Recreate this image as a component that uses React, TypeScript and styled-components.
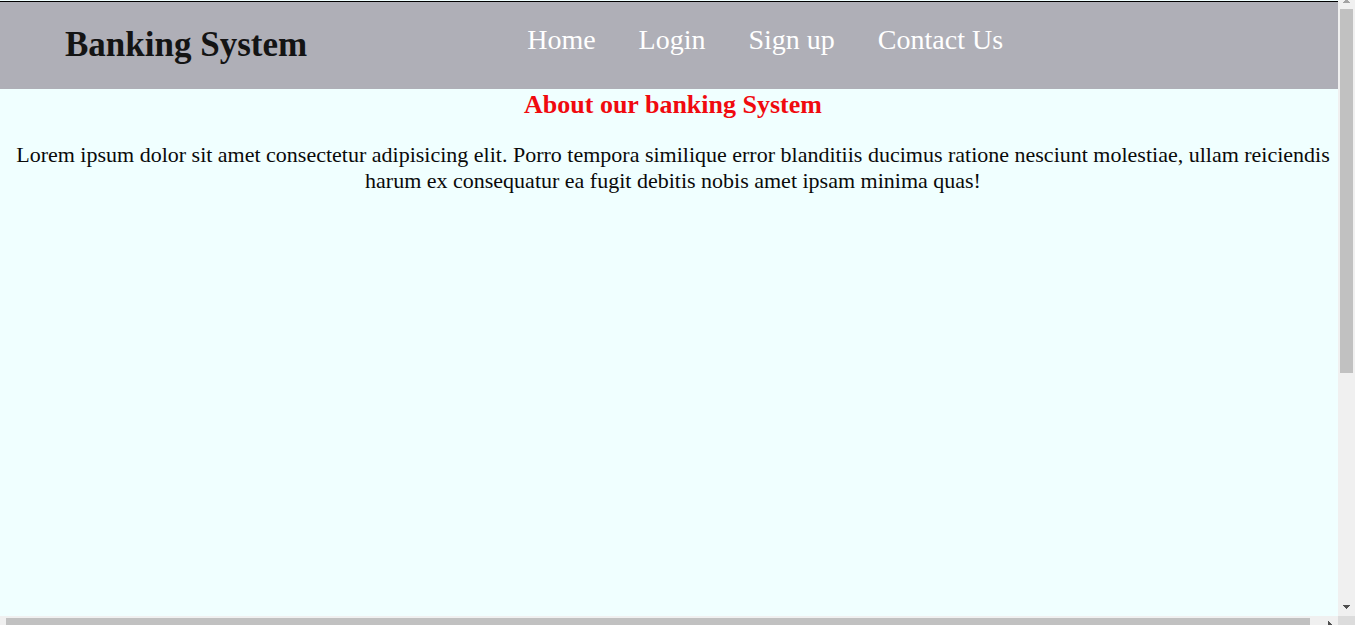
import React from "react";
import styled, { createGlobalStyle } from "styled-components";

const GlobalStyle = createGlobalStyle`
  *, *::before, *::after { box-sizing: border-box; }
  body {
    margin: 0;
    background: azure;
    font-family: "Liberation Serif", "Times New Roman", serif;
  }
`;

const Window = styled.div`
  display: grid;
  grid-template-columns: minmax(0, 1fr) 17px;
  grid-template-rows: minmax(0, 1fr) 9px;
  height: 100vh;
  overflow: hidden;
`;

const Page = styled.div`
  padding-top: 1px;
  overflow: hidden;
  background: azure;
`;

const Header = styled.header`
  display: flex;
  align-items: flex-start;
  height: 88px;
  padding: 22px 0 0 65px;
  border-top: 1px solid #000;
  background: #afafb7;
`;

const Brand = styled.h1`
  flex: none;
  margin: 0;
  color: #141414;
  font-size: 35px;
  line-height: 42px;
`;

const Nav = styled.nav`
  flex: none;
  margin-left: 220px;
`;

const NavList = styled.ul`
  display: flex;
  gap: 43px;
  margin: 0;
  padding: 0;
  list-style: none;
`;

const NavLink = styled.a`
  color: #fff;
  font-size: 28px;
  line-height: 32px;
  text-decoration: none;
`;

const About = styled.main`
  padding-left: 8px;
  text-align: center;
`;

const AboutTitle = styled.h2`
  margin: 0;
  color: #f00a0f;
  font-size: 26px;
  line-height: 32px;
`;

const AboutText = styled.p`
  margin: 21px 0 0;
  color: #0a0a0a;
  font-size: 22px;
  line-height: 26px;
`;

const VerticalBar = styled.div`
  display: flex;
  flex-direction: column;
  align-items: center;
  padding-bottom: 7px;
  background: #f0f0f0;
`;

const VerticalTrack = styled.div`
  flex: 1;
  width: 13px;
  padding-top: 6px;
`;

const VerticalThumb = styled.div`
  height: 61%;
  background: #c1c1c1;
`;

const HorizontalBar = styled.div`
  display: flex;
  align-items: flex-end;
  padding-left: 6px;
  padding-right: 6px;
  background: #f0f0f0;
`;

const HorizontalThumb = styled.div`
  flex: 1;
  height: 7px;
  margin-right: 18px;
  background: #c1c1c1;
`;

const Corner = styled.div`
  background: #dcdcdc;
`;

const Arrow = styled.svg`
  display: block;
  flex: none;
`;

const links = ["Home", "Login", "Sign up", "Contact Us"];

export default function App() {
  return (
    <>
      <GlobalStyle />
      <Window>
        <Page>
          <Header>
            <Brand>Banking System</Brand>
            <Nav>
              <NavList>
                {links.map((label) => (
                  <li key={label}>
                    <NavLink href="#">{label}</NavLink>
                  </li>
                ))}
              </NavList>
            </Nav>
          </Header>
          <About>
            <AboutTitle>About our banking System</AboutTitle>
            <AboutText>
              Lorem ipsum dolor sit amet consectetur adipisicing elit. Porro
              tempora similique error blanditiis ducimus ratione nesciunt
              molestiae, ullam reiciendis harum ex consequatur ea fugit debitis
              nobis amet ipsam minima quas!
            </AboutText>
          </About>
        </Page>
        <VerticalBar aria-hidden="true">
          <Arrow width="7" height="3" shapeRendering="crispEdges">
            <path d="M2 0h3v1h1v1h1v1H0V2h1V1h1z" fill="#a3a3a3" />
          </Arrow>
          <VerticalTrack>
            <VerticalThumb />
          </VerticalTrack>
          <Arrow width="7" height="4" shapeRendering="crispEdges">
            <path d="M0 0h7v1H6v1H5v1H4v1H3V3H2V2H1V1H0z" fill="#505050" />
          </Arrow>
        </VerticalBar>
        <HorizontalBar aria-hidden="true">
          <HorizontalThumb />
          <Arrow width="4" height="4" shapeRendering="crispEdges">
            <path d="M0 0h1v1h1v1h1v1h1v1H0z" fill="#505050" />
          </Arrow>
        </HorizontalBar>
        <Corner />
      </Window>
    </>
  );
}
